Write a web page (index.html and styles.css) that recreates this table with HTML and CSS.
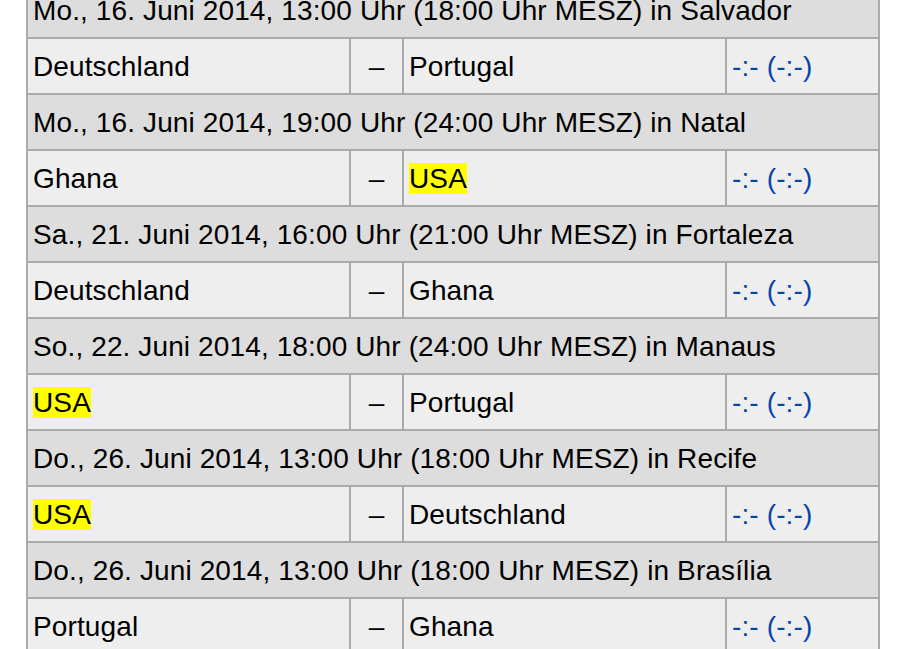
FILE: index.html
```html
<!DOCTYPE html>
<html lang="de">
<head>
<meta charset="utf-8">
<title>Gruppe G</title>
<link rel="stylesheet" href="styles.css">
</head>
<body>
<table class="matches">
  <colgroup>
    <col class="c-home">
    <col class="c-dash">
    <col class="c-away">
    <col class="c-result">
  </colgroup>
  <tbody>
    <tr class="info"><td colspan="4">Mo., 16. Juni 2014, 13:00 Uhr (18:00 Uhr MESZ) in Salvador</td></tr>
    <tr class="game"><td>Deutschland</td><td class="dash">–</td><td>Portugal</td><td><a href="#">-:- (-:-)</a></td></tr>
    <tr class="info"><td colspan="4">Mo., 16. Juni 2014, 19:00 Uhr (24:00 Uhr MESZ) in Natal</td></tr>
    <tr class="game"><td>Ghana</td><td class="dash">–</td><td><span class="hl">USA</span></td><td><a href="#">-:- (-:-)</a></td></tr>
    <tr class="info"><td colspan="4">Sa., 21. Juni 2014, 16:00 Uhr (21:00 Uhr MESZ) in Fortaleza</td></tr>
    <tr class="game"><td>Deutschland</td><td class="dash">–</td><td>Ghana</td><td><a href="#">-:- (-:-)</a></td></tr>
    <tr class="info"><td colspan="4">So., 22. Juni 2014, 18:00 Uhr (24:00 Uhr MESZ) in Manaus</td></tr>
    <tr class="game"><td><span class="hl">USA</span></td><td class="dash">–</td><td>Portugal</td><td><a href="#">-:- (-:-)</a></td></tr>
    <tr class="info"><td colspan="4">Do., 26. Juni 2014, 13:00 Uhr (18:00 Uhr MESZ) in Recife</td></tr>
    <tr class="game"><td><span class="hl">USA</span></td><td class="dash">–</td><td>Deutschland</td><td><a href="#">-:- (-:-)</a></td></tr>
    <tr class="info"><td colspan="4">Do., 26. Juni 2014, 13:00 Uhr (18:00 Uhr MESZ) in Brasília</td></tr>
    <tr class="game"><td>Portugal</td><td class="dash">–</td><td>Ghana</td><td><a href="#">-:- (-:-)</a></td></tr>
  </tbody>
</table>
</body>
</html>
```
FILE: styles.css
```css
html, body {
  margin: 0;
  padding: 0;
  background: #fff;
}
body {
  font-family: "Liberation Sans", Arial, sans-serif;
  font-size: 28px;
  letter-spacing: 0.12px;
  color: #000;
}
.matches {
  border-collapse: collapse;
  table-layout: fixed;
  width: 854px;
  margin: -19px 0 0 26px;
}
.c-home { width: 323px; }
.c-dash { width: 53px; }
.c-away { width: 323px; }
.c-result { width: 153px; }
.matches td {
  border: 2px solid #aaa;
  padding: 1px 5px 0;
  height: 53px;
  line-height: 32px;
  vertical-align: middle;
  text-align: left;
  white-space: nowrap;
}
.info td { background: #ddd; }
.game td { background: #eee; }
.matches td.dash { text-align: center; padding: 1px 0 0; }
.matches a {
  color: #0645ad;
  text-decoration: none;
}
.hl { background: #ff0; }
```
